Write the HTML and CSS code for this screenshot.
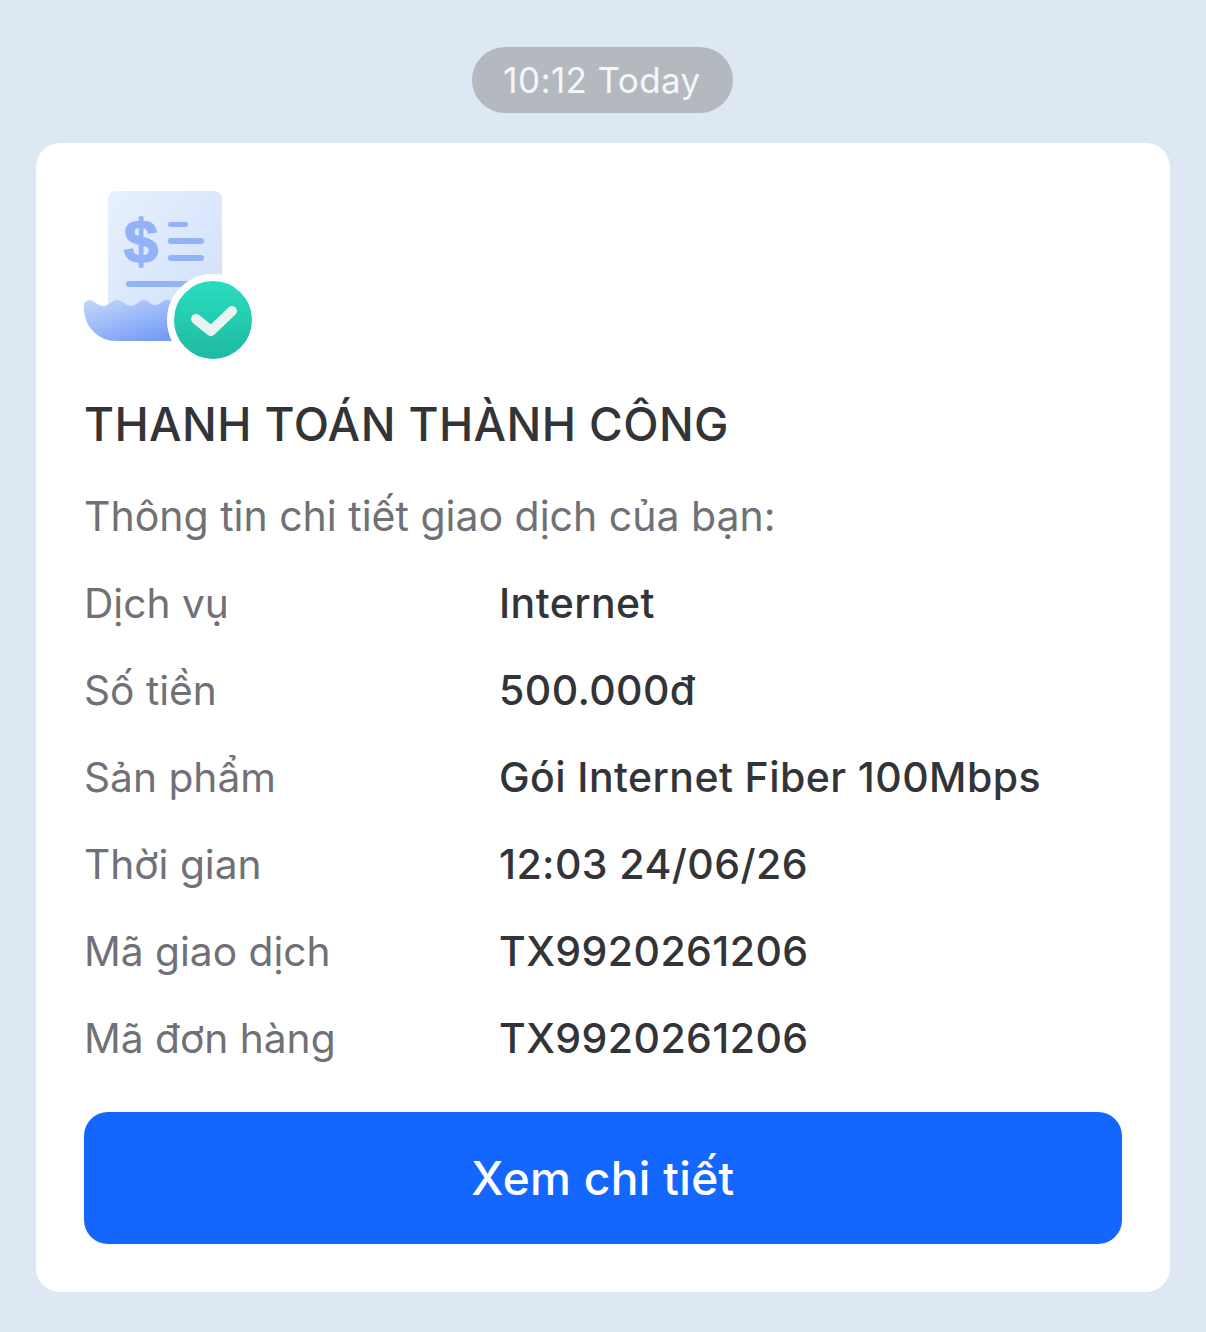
FILE: index.html
```html
<!DOCTYPE html>
<html lang="vi">
<head>
    <meta charset="UTF-8">
    <title>Thanh toán thành công</title>
    <link rel="stylesheet" href="styles.css">
</head>
<body>
    <div class="time-wrap"><span class="time">10:12 Today</span></div>
    <div class="card">
        <svg class="icon" width="170" height="170" viewBox="0 0 170 170">
            <defs>
                <linearGradient id="paper" x1="0" y1="0" x2="1" y2="1">
                    <stop offset="0" stop-color="#e8f0fd"/>
                    <stop offset="1" stop-color="#cfdffb"/>
                </linearGradient>
                <linearGradient id="wave" x1="0" y1="0" x2="0.7" y2="1">
                    <stop offset="0" stop-color="#c6d9fb"/>
                    <stop offset="1" stop-color="#769df6"/>
                </linearGradient>
                <linearGradient id="badge" x1="0" y1="0" x2="0" y2="1">
                    <stop offset="0" stop-color="#2adfc0"/>
                    <stop offset="1" stop-color="#1fb89f"/>
                </linearGradient>
            </defs>
            <path d="M24 8a8 8 0 0 1 8-8h98a8 8 0 0 1 8 8v130H24z" fill="url(#paper)"/>
            <path d="M0 112c3-3 6-4 9-2s7 5 11 5 8-6 13-6 9 6 14 6 7-5 12-6 7 5 12 5 7-5 12-5 6 3 12 3v38H32a32 32 0 0 1-32-31z" fill="url(#wave)"/>
            <rect x="42" y="90" width="70" height="6" rx="3" fill="#93b3f8"/>
            <rect x="84" y="31" width="20" height="5" rx="2.5" fill="#93b3f8"/>
            <rect x="84" y="47" width="36" height="6" rx="3" fill="#93b3f8"/>
            <rect x="84" y="64" width="36" height="6" rx="3" fill="#93b3f8"/>
            <text class="dollar" x="57" y="71" text-anchor="middle">$</text>
            <circle cx="129" cy="129" r="42.5" fill="url(#badge)" stroke="#fff" stroke-width="7"/>
            <path d="M112 128l15 12 21-20" fill="none" stroke="#e8f6f3" stroke-width="10" stroke-linecap="round" stroke-linejoin="round"/>
        </svg>
        <h1 class="title">THANH TOÁN THÀNH CÔNG</h1>
        <p class="intro">Thông tin chi tiết giao dịch của bạn:</p>
        <div class="rows">
            <div class="row"><span class="label">Dịch vụ</span><span class="value">Internet</span></div>
            <div class="row"><span class="label">Số tiền</span><span class="value">500.000đ</span></div>
            <div class="row"><span class="label">Sản phẩm</span><span class="value">Gói Internet Fiber 100Mbps</span></div>
            <div class="row"><span class="label">Thời gian</span><span class="value">12:03 24/06/26</span></div>
            <div class="row"><span class="label">Mã giao dịch</span><span class="value">TX9920261206</span></div>
            <div class="row"><span class="label">Mã đơn hàng</span><span class="value">TX9920261206</span></div>
        </div>
        <button class="btn">Xem chi tiết</button>
    </div>
</body>
</html>
```
FILE: styles.css
```css
* {
    box-sizing: border-box;
}

body {
    margin: 0;
    height: 1332px;
    overflow: hidden;
    padding: 47px 36px 0;
    background-color: #dee8f3;
    font-family: Inter, "Noto Sans", sans-serif;
    color: #333438;
}

.time-wrap {
    display: flex;
    justify-content: center;
    margin-bottom: 30px;
}

.time {
    width: 261px;
    height: 66px;
    margin-left: -2px;
    border-radius: 33px;
    background-color: #b4b9c0;
    color: #f4f6f8;
    font-size: 35px;
    letter-spacing: 0.4px;
    line-height: 66px;
    text-align: center;
}

.card {
    height: 1149px;
    padding: 48px 48px 0;
    background-color: #fff;
    border-radius: 24px;
}

.icon {
    display: block;
    margin-bottom: 33px;
}

.dollar {
    font-family: "Liberation Sans", sans-serif;
    font-size: 62px;
    font-weight: 700;
    fill: #93b3f8;
    stroke: #93b3f8;
    stroke-width: 1.5px;
}

.title {
    margin: 0 0 19px;
    font-size: 46px;
    font-weight: 500;
    letter-spacing: 0.4px;
    line-height: 60px;
}

.intro {
    margin: 0;
    height: 87px;
    font-size: 41px;
    letter-spacing: -0.01px;
    line-height: 87px;
    color: #6f7176;
}

.row {
    display: flex;
    height: 87px;
    font-size: 40.7px;
    line-height: 87px;
}

.label {
    width: 415px;
    color: #6f7176;
}

.value {
    font-weight: 500;
    font-size: 41px;
    letter-spacing: 0.42px;
}

.btn {
    display: block;
    width: 100%;
    height: 132px;
    margin-top: 30px;
    border: none;
    border-radius: 24px;
    background-color: #1367ff;
    color: #fff;
    font-family: inherit;
    font-size: 46px;
    font-weight: 500;
    letter-spacing: 0.35px;
}
```
